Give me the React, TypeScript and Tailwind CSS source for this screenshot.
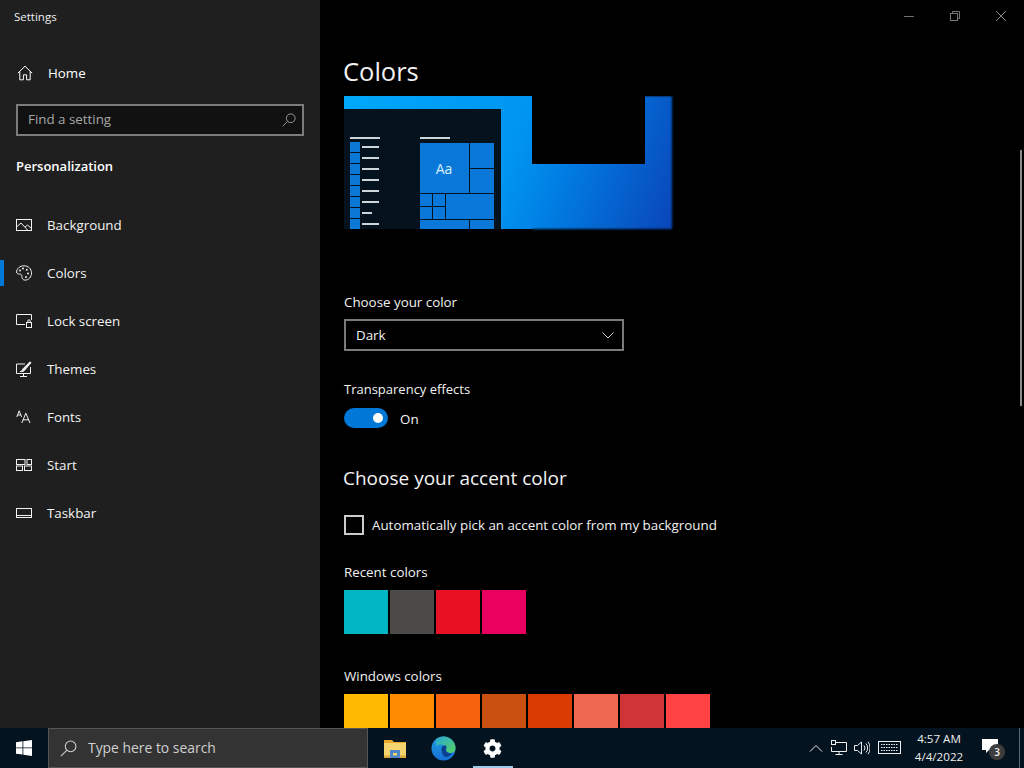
import { FaCog } from "react-icons/fa";

const font = { fontFamily: '"Open Sans", "Noto Sans", sans-serif' };

const ico = { fill: "none", stroke: "currentColor", strokeWidth: 1 } as const;

function HomeIcon() {
  return (
    <svg width="16" height="16" viewBox="0 0 16 16" {...ico} className="text-white">
      <path d="M.8 8.200 8 1.200l7.200 7M2.800 6.600v8.200h3.600v-5h3.200v5h3.600V6.600" />
    </svg>
  );
}
function BackgroundIcon() {
  return (
    <svg width="16" height="14" viewBox="0 0 16 14" {...ico}>
      <rect x=".5" y="1.500" width="15" height="11" />
      <path d="M.5 9 5 5l7 7.500M9 9l2.500-2 4 3.500" />
    </svg>
  );
}
function ColorsIcon() {
  return (
    <svg width="16" height="16" viewBox="0 0 16 16" {...ico}>
      <path d="M8 .8C3.800.8.600 3.600.600 7c0 1.600 1.500 2.100 2.800 2.100 1.500 0 2.500.5 2.500 2 0 1.200.1 4 3.300 4 3.600 0 6.300-3.200 6.300-7.200C15.500 3.800 12.200.8 8 .8Z" />
      <circle cx="4" cy="5.500" r="1" fill="currentColor" stroke="none" />
      <circle cx="7" cy="3.500" r="1" fill="currentColor" stroke="none" />
      <circle cx="10.800" cy="4.800" r="1" fill="currentColor" stroke="none" />
      <circle cx="12" cy="8.500" r="1" fill="currentColor" stroke="none" />
      <circle cx="10" cy="12" r="1" fill="currentColor" stroke="none" />
    </svg>
  );
}
function LockIcon() {
  return (
    <svg width="16" height="14" viewBox="0 0 16 14" {...ico}>
      <path d="M9 10.500H.5v-10h15V6" />
      <rect x="10.500" y="8.500" width="5" height="5" />
      <path d="M11.800 8.500V7a1.200 1.200 0 0 1 2.400 0v1.500" />
    </svg>
  );
}
function ThemesIcon() {
  return (
    <svg width="16" height="16" viewBox="0 0 16 16" {...ico}>
      <path d="M9 3H.5v9.500h14V6M7.500 12.500v2.500M4 15.500h7" />
      <path d="M4 10.500c1.500 0 2.500-.8 2.500-2.200L14 .8l1 1-6.500 7.500c-.5 1-2 1.500-4.500 1.200Z" fill="currentColor" />
    </svg>
  );
}
function FontsIcon() {
  return (
    <svg width="16" height="14" viewBox="0 0 16 14" {...ico}>
      <path d="M.8 7 3.200.8 5.600 7M1.600 5h3.200M5.800 13 9.800 3.200 14 13M7 9.800h5.800" />
    </svg>
  );
}
function StartIcon() {
  return (
    <svg width="16" height="12" viewBox="0 0 16 12" {...ico}>
      <rect x=".5" y=".5" width="8.500" height="5" />
      <rect x="11" y=".5" width="4.500" height="5" />
      <rect x=".5" y="7" width="6" height="4.500" />
      <rect x="8.500" y="7" width="7" height="4.500" />
    </svg>
  );
}
function TaskbarIcon() {
  return (
    <svg width="16" height="10" viewBox="0 0 16 10" {...ico}>
      <rect x=".5" y=".5" width="15" height="9" />
      <path d="M.5 7.500h15" />
    </svg>
  );
}
function SearchGlass({ size = 16 }: { size?: number }) {
  return (
    <svg width={size} height={size} viewBox="0 0 16 16" {...ico}>
      <circle cx="10" cy="6" r="5" />
      <path d="M6.300 9.700.8 15.200" />
    </svg>
  );
}

const navItems = [
  { label: "Background", icon: <BackgroundIcon /> },
  { label: "Colors", icon: <ColorsIcon />, active: true },
  { label: "Lock screen", icon: <LockIcon /> },
  { label: "Themes", icon: <ThemesIcon /> },
  { label: "Fonts", icon: <FontsIcon /> },
  { label: "Start", icon: <StartIcon /> },
  { label: "Taskbar", icon: <TaskbarIcon /> },
];

function Preview() {
  const lineYs = [146, 157, 168, 179, 190, 201, 212, 223];
  return (
    <svg width="332" height="136" viewBox="344 96 332 136" className="block">
      <defs>
        <linearGradient id="wall" gradientUnits="userSpaceOnUse" x1="344" y1="96" x2="680" y2="210">
          <stop offset="0" stopColor="#00a8fa" />
          <stop offset="0.5" stopColor="#0095f0" />
          <stop offset="0.64" stopColor="#0080e4" />
          <stop offset="1" stopColor="#0a45b9" />
        </linearGradient>
        <filter id="soft" x="-5%" y="-5%" width="110%" height="110%" colorInterpolationFilters="sRGB">
          <feGaussianBlur stdDeviation="1" />
        </filter>
      </defs>
      <rect x="344" y="96" width="328" height="133" fill="url(#wall)" filter="url(#soft)" />
      <rect x="344" y="96" width="188" height="13" fill="url(#wall)" />
      <rect x="501" y="109" width="31" height="120" fill="url(#wall)" />
      <rect x="532" y="90" width="113" height="74" fill="#000" />
      <rect x="344" y="109" width="157" height="120" fill="#03121c" />
      <rect x="344" y="229" width="188" height="7" fill="#000" />
      <rect x="350" y="137" width="30" height="2" fill="#cfd6da" />
      <rect x="420" y="137" width="30" height="2" fill="#cfd6da" />
      {lineYs.map((y, i) => (
        <g key={y}>
          <rect x="350" y={y - 4} width="10" height="10" fill="#0a78d4" />
          <rect x="362" y={y} width={i === 6 ? 10 : 17} height="2" fill="#cfd6da" />
        </g>
      ))}
      <g fill="#0a78d8">
        <rect x="420" y="143" width="49" height="50" />
        <rect x="470" y="143" width="24" height="25" />
        <rect x="470" y="169" width="24" height="24" />
        <rect x="420" y="194" width="12" height="12" />
        <rect x="433" y="194" width="12" height="12" />
        <rect x="420" y="207" width="12" height="12" />
        <rect x="433" y="207" width="12" height="12" />
        <rect x="446" y="194" width="48" height="25" />
        <rect x="420" y="220" width="49" height="9" />
        <rect x="470" y="220" width="24" height="9" />
      </g>
      <text x="444" y="174" textAnchor="middle" fontSize="14" fill="#d8f0ff" style={font}>
        Aa
      </text>
    </svg>
  );
}

function Swatches({ colors }: { colors: string[] }) {
  return (
    <div className="mt-2 flex gap-[2px]">
      {colors.map((c) => (
        <div key={c} className="h-11 w-11 shrink-0" style={{ backgroundColor: c }} />
      ))}
    </div>
  );
}

function EdgeIcon() {
  return (
    <svg width="25" height="25" viewBox="0 0 25 25">
      <defs>
        <linearGradient id="edgeA" x1="0" y1="0" x2="0" y2="1">
          <stop offset="0" stopColor="#1f9fe0" />
          <stop offset="1" stopColor="#1670d6" />
        </linearGradient>
        <linearGradient id="edgeB" x1="0" y1="0" x2="1" y2="1">
          <stop offset="0" stopColor="#28a9d6" />
          <stop offset="1" stopColor="#58d25e" />
        </linearGradient>
      </defs>
      <circle cx="12.500" cy="12.500" r="12" fill="url(#edgeA)" />
      <path d="M5 3.200C8 .5 12 0 15 .8c5 1.200 9.500 5.500 9.500 11.200 0 3-1.500 4.800-4.500 4.800-2.500 0-4.500-.8-5-2.300 1-2 .2-4.800-2.500-5.500C10 8 6.500 8.500 5 10.500Z" fill="url(#edgeB)" />
      <path d="M10.500 13c0-2 1.500-3.500 3.500-3.500 1.500 0 2 1.500 1 3-.8 2.500 1.500 5.500 6 5-1.500 2.200-3.500 3.500-5.500 3.500-3 0-5-3.500-5-8Z" fill="#0b3f90" />
    </svg>
  );
}

function FolderIcon() {
  return (
    <svg width="22" height="20" viewBox="0 0 22 20">
      <path d="M0 2h8l2 2h12v3H0Z" fill="#e8a92c" />
      <rect x="0" y="5" width="22" height="15" fill="#f4d46e" />
      <rect x="0" y="17.500" width="22" height="2.500" fill="#d9a93a" />
      <rect x="6" y="12" width="10" height="8" fill="#4f87c7" />
      <rect x="9" y="15" width="4" height="2.500" fill="#f4d46e" />
    </svg>
  );
}

export default function App() {
  return (
    <div className="flex h-screen w-full flex-col overflow-hidden bg-black text-white" style={font}>
      <div className="flex h-[728px] shrink-0 overflow-hidden">
        <aside className="flex w-[320px] shrink-0 flex-col bg-[#1f1f1f]">
          <div className="h-[34px] pl-[14px] pt-[8px] text-[11.500px] leading-[18px] text-[#eeeeee]">Settings</div>
          <div className="mt-[15px] flex h-12 items-center pl-[17px]">
            <HomeIcon />
            <span className="ml-[15px] text-[13.350px]">Home</span>
          </div>
          <div className="mx-4 mt-[7px] flex h-8 items-center justify-between border-2 border-[#7b7b7b] bg-[#111111] pl-[10px] pr-[6px] text-[#a8a8a8]">
            <span className="text-[13.350px] leading-none">Find a setting</span>
            <SearchGlass size={14} />
          </div>
          <div className="mt-5 pl-4 text-[13px] font-semibold leading-5">Personalization</div>
          <nav className="mt-[25px] flex flex-col">
            {navItems.map((n) => (
              <div key={n.label} className="relative flex h-12 items-center pl-4 text-[#f2f2f2]">
                {n.active && <div className="absolute left-0 top-[11px] h-[26px] w-1 bg-[#0078d7]" />}
                <div className="flex w-4 justify-center">{n.icon}</div>
                <span className="ml-[15px] text-[13.350px]">{n.label}</span>
              </div>
            ))}
          </nav>
        </aside>

        <main className="relative min-w-0 flex-1 overflow-hidden bg-black pl-6 text-[#f2f2f2]">
          <div className="absolute right-0 top-0 flex h-8 items-center text-[#8a8a8a]">
            <div className="flex w-[46px] justify-center">
              <div className="h-px w-[10px] bg-[#6f6f6f]" />
            </div>
            <div className="flex w-[46px] justify-center">
              <svg width="10" height="10" viewBox="0 0 10 10" {...ico} className="text-[#777777]">
                <rect x=".5" y="2.500" width="7" height="7" />
                <path d="M2.500 2.500V.5h7v7H7.500" />
              </svg>
            </div>
            <div className="flex w-[46px] justify-center">
              <svg width="10" height="10" viewBox="0 0 10 10" {...ico}>
                <path d="M0 0l10 10M10 0 0 10" />
              </svg>
            </div>
          </div>
          <div className="absolute right-[2px] top-[150px] h-[256px] w-[2px] bg-[#8c8c8c]" />

          <div className="-ml-px h-24 pt-[51px] text-[25.500px] leading-10">Colors</div>
          <Preview />
          <div className="mt-[60px] text-[13.350px] leading-5">Choose your color</div>
          <div className="mt-[7px] flex h-8 w-[280px] items-center justify-between border-2 border-[#7b7b7b] pl-[10px] pr-[8px]">
            <span className="text-[13.350px]">Dark</span>
            <svg width="12" height="7" viewBox="0 0 12 7" {...ico} className="text-[#c8c8c8]">
              <path d="M.5.5 6 6 11.500.5" />
            </svg>
          </div>
          <div className="mt-[28px] text-[13px] leading-5">Transparency effects</div>
          <div className="mt-[9px] flex h-5 items-center">
            <div className="flex h-5 w-11 items-center justify-end rounded-full bg-[#0078d7] pr-[5px]">
              <div className="h-[10px] w-[10px] rounded-full bg-white" />
            </div>
            <span className="ml-3 pt-[2px] text-[13.350px]">On</span>
          </div>
          <div className="-ml-px mt-9 text-[19px] leading-7">Choose your accent color</div>
          <div className="mt-[23px] flex h-5 items-center">
            <div className="h-5 w-5 border-2 border-[#cccccc]" />
            <span className="ml-2 text-[13.350px]">Automatically pick an accent color from my background</span>
          </div>
          <div className="mt-[27px] text-[13.350px] leading-5">Recent colors</div>
          <Swatches colors={["#00b7c3", "#4c4a48", "#e81123", "#ea005e"]} />
          <div className="mt-8 text-[13.350px] leading-5">Windows colors</div>
          <Swatches
            colors={["#ffb900", "#ff8c00", "#f7630c", "#ca5010", "#da3b01", "#ef6950", "#d13438", "#ff4343"]}
          />
        </main>
      </div>

      <footer className="flex h-10 shrink-0 items-center bg-[#03131f]">
        <div className="flex h-10 w-12 items-center justify-center">
          <svg width="16" height="16" viewBox="0 0 16 16" fill="#ffffff">
            <path d="M0 2.200 6.500 1.300v6.200H0ZM7.300 1.200 16 0v7.500H7.300ZM0 8.300h6.500v6.300L0 13.800ZM7.300 8.300H16V16l-8.700-1.200Z" />
          </svg>
        </div>
        <div className="flex h-10 w-[320px] items-center border border-[#555555] bg-[#333333] pl-[11px] text-[#d0d0d0]">
          <SearchGlass size={17} />
          <span className="ml-[11px] text-[13.900px] leading-none">Type here to search</span>
        </div>
        <div className="ml-[3px] flex h-10 items-center">
          <div className="flex h-10 w-12 items-center justify-center">
            <FolderIcon />
          </div>
          <div className="flex h-10 w-12 items-center justify-center pl-[1px]">
            <EdgeIcon />
          </div>
          <div className="relative flex h-10 w-[50px] items-center justify-center">
            <FaCog size={19} color="#ffffff" />
            <div className="absolute bottom-0 left-[6px] h-[2px] w-10 bg-[#9fc9e8]" />
          </div>
        </div>
        <div className="ml-auto flex h-10 items-center text-[#eeeeee]">
          <svg width="14" height="8" viewBox="0 0 14 8" {...ico}>
            <path d="M1 7.500 7 1.500l6 6" />
          </svg>
          <svg width="16" height="16" viewBox="0 0 16 16" {...ico} className="ml-[8px]">
            <path d="M5 2.500h10.500v9H.5V7M8 11.500v3M4.500 14.500h7" />
            <rect x=".5" y=".5" width="4" height="4" />
          </svg>
          <svg width="16" height="14" viewBox="0 0 16 14" {...ico} className="ml-[7px]">
            <path d="M.5 4.500h3l4-3.500v12l-4-3.500h-3ZM10 4.500a4 4 0 0 1 0 5M12 2.500a7 7 0 0 1 0 9M14 .8a10 10 0 0 1 0 12.400" />
          </svg>
          <svg width="24" height="14" viewBox="0 0 24 14" {...ico} className="ml-[8px]">
            <rect x=".5" y=".5" width="22" height="12" />
            <path d="M3 3.500h17M3 6.500h17M3 9.500h17" strokeDasharray="1.500 1" />
          </svg>
          <div className="ml-[9px] flex w-[56px] flex-col items-center text-[11.600px] leading-[18px]">
            <span>4:57 AM</span>
            <span>4/4/2022</span>
          </div>
          <div className="relative ml-[16px] mr-[16px] h-5 w-5">
            <svg width="16" height="15" viewBox="0 0 16 15" fill="#ffffff" className="absolute -left-px top-[1px]">
              <path d="M0 0h16v11H7l-3 3v-3H0Z" />
            </svg>
            <div className="absolute -right-[2px] top-[6px] flex h-4 w-4 items-center justify-center rounded-full bg-[#3d3d3d] text-[10px] font-semibold leading-none">
              3
            </div>
          </div>
          <div className="mr-[1px] h-10 w-px bg-[#5a6670]" />
          <div className="w-[3px]" />
        </div>
      </footer>
    </div>
  );
}
